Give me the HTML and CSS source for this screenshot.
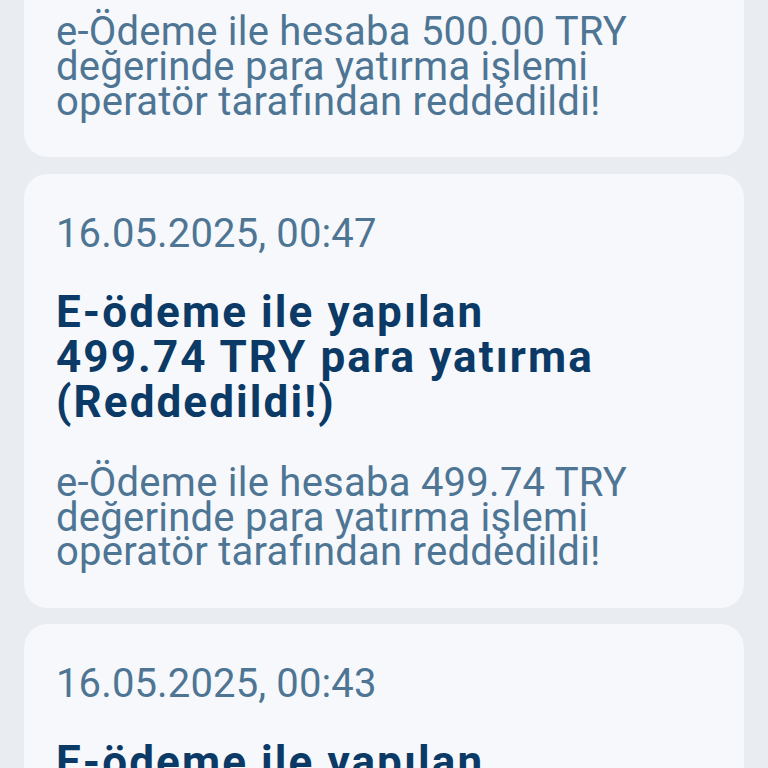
FILE: index.html
```html
<!DOCTYPE html>
<html>

<head>
    <meta charset="utf-8">
    <meta name='viewport' content='width=device-width initial-scale=1'>
    <title>Bildirimler</title>
    <link rel="stylesheet" href="styles.css">
</head>

<body>
    <main class="feed">
        <article class="note">
            <p class="note_time">16.05.2025, 00:51</p>
            <h3 class="note_title">E-ödeme ile yapılan<br>500.00 TRY para yatırma (Reddedildi!)</h3>
            <p class="note_text">e-Ödeme ile hesaba 500.00 TRY değerinde para yatırma işlemi operatör tarafından reddedildi!</p>
        </article>
        <article class="note">
            <p class="note_time">16.05.2025, 00:47</p>
            <h3 class="note_title">E-ödeme ile yapılan<br>499.74 TRY para yatırma (Reddedildi!)</h3>
            <p class="note_text">e-Ödeme ile hesaba 499.74 TRY değerinde para yatırma işlemi operatör tarafından reddedildi!</p>
        </article>
        <article class="note">
            <p class="note_time">16.05.2025, 00:43</p>
            <h3 class="note_title">E-ödeme ile yapılan<br>499.74 TRY para yatırma (Reddedildi!)</h3>
            <p class="note_text">e-Ödeme ile hesaba 499.74 TRY değerinde para yatırma işlemi operatör tarafından reddedildi!</p>
        </article>
    </main>
</body>

</html>
```

FILE: styles.css
```css
html {
    background-color: #e9edf2;
}

body {
    margin: 0;
    font-family: Roboto, "Noto Sans", sans-serif;
}

/* list is scrolled: first card is cut off at the top */
.feed {
    display: flex;
    flex-direction: column;
    gap: 16.5px;
    margin-top: -277px;
    padding: 0 24px;
}

.note {
    padding: 36px 32px 38px 32px;
    border-radius: 24px;
    background-color: #f6f8fb;
}

.note_time {
    margin: 0;
    font-size: 40px;
    line-height: 48px;
    letter-spacing: 0.13px;
    color: #4e7594;
}

.note_title {
    margin: 32px 0 0 0;
    font-size: 44px;
    line-height: 45.3px;
    font-weight: 700;
    letter-spacing: 2.1px;
    color: #0c3a66;
}

.note_text {
    margin: 40.5px 0 0 0;
    font-size: 40px;
    line-height: 34.6px;
    letter-spacing: 0.25px;
    color: #4e7594;
}
```
